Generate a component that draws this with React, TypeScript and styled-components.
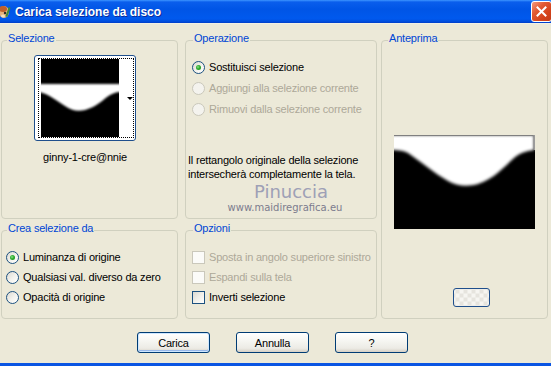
import React from 'react';
import styled, { createGlobalStyle, css } from 'styled-components';

const GlobalStyle = createGlobalStyle`
  html, body { margin: 0; padding: 0; background: #ECE9D8; }
  body { font-family: "Liberation Sans", Arial, sans-serif; font-size: 11px; letter-spacing: -0.2px; color: #000; }
  * { box-sizing: border-box; }
`;

const Window = styled.div`
  width: 551px;
  height: 366px;
  background: #ECE9D8;
  display: flex;
  flex-direction: column;
  border-bottom: 3px solid #0A55E3;
  overflow: hidden;
`;

const TitleBar = styled.div`
  height: 24px;
  flex: none;
  display: flex;
  align-items: center;
  background: linear-gradient(#3D95FF 0px, #0A5EEC 2px, #0055E6 40%, #0059EE 80%, #0050E0 92%, #003DC8 100%);
  border-bottom: 1px solid #F2F0E4;
`;

const TitleIcon = styled.svg`
  width: 11px;
  height: 16px;
  flex: none;
`;

const TitleText = styled.span`
  margin-left: 4px;
  color: #fff;
  font-weight: bold;
  font-size: 12px;
  letter-spacing: 0;
  text-shadow: 1px 1px 0 #0B2B9A;
`;

const CloseButton = styled.div`
  margin-left: auto;
  margin-right: -1px;
  width: 21px;
  height: 21px;
  border: 1px solid #fff;
  border-radius: 3px;
  background: linear-gradient(135deg, #F39A7E 0%, #E25A33 35%, #D4431B 70%, #C23C1A 100%);
  display: flex;
  align-items: center;
  justify-content: center;
`;

const Body = styled.div`
  flex: 1;
  display: flex;
  flex-direction: column;
  padding: 16px 3px 0 1px;
`;

const Columns = styled.div`
  display: flex;
  align-items: flex-start;
`;

const Column = styled.div<{ $width: number; $after: number }>`
  width: ${p => p.$width}px;
  margin-right: ${p => p.$after}px;
  display: flex;
  flex-direction: column;
  gap: 11px;
  flex: none;
`;

const Group = styled.div<{ $height: number }>`
  position: relative;
  height: ${p => p.$height}px;
  border: 1px solid #D0D0BF;
  border-radius: 4px;
  display: flex;
  flex-direction: column;
`;

const Legend = styled.span<{ $left?: number }>`
  position: absolute;
  top: -9px;
  left: ${p => p.$left ?? 5}px;
  padding: 0 1px;
  line-height: 13px;
  background: #ECE9D8;
  color: #0046D5;
`;

const SelectionContent = styled.div`
  display: flex;
  flex-direction: column;
  align-items: center;
  align-self: flex-start;
  margin: 14px 0 0 32px;
`;

const Thumb = styled.div`
  width: 102px;
  height: 86px;
  border: 1px solid #1F4F8C;
  border-radius: 3px;
  background: #fff;
  padding: 2px 1px 2px 3px;
`;

const FocusRect = styled.div`
  width: 100%;
  height: 100%;
  border: 1px dotted #000;
  display: flex;
  padding-left: 2px;
`;

const ThumbImage = styled.svg`
  width: 78px;
  height: 78px;
  flex: none;
  display: block;
`;

const ArrowStrip = styled.div`
  flex: 1;
  display: flex;
  align-items: center;
  justify-content: flex-end;
`;

const DownArrow = styled.span`
  width: 0;
  height: 0;
  border-left: 3px solid transparent;
  border-right: 3px solid transparent;
  border-top: 3px solid #000;
`;

const FileName = styled.div`
  margin-top: 10px;
  line-height: 13px;
`;

const OptionList = styled.div<{ $top: number; $left: number; $gap: number }>`
  display: flex;
  flex-direction: column;
  gap: ${p => p.$gap}px;
  padding: ${p => p.$top}px 0 0 ${p => p.$left}px;
`;

const OptionRow = styled.label<{ $disabled?: boolean }>`
  display: flex;
  align-items: center;
  gap: 4px;
  height: 13px;
  line-height: 13px;
  white-space: nowrap;
  color: ${p => (p.$disabled ? '#ACA899' : '#000')};
`;

const RadioMark = styled.span<{ $checked?: boolean; $disabled?: boolean }>`
  width: 13px;
  height: 13px;
  flex: none;
  border-radius: 50%;
  display: flex;
  align-items: center;
  justify-content: center;
  ${p =>
    p.$disabled
      ? css`
          border: 1px solid #CAC8BB;
          background: #F4F3EE;
        `
      : css`
          border: 1px solid #1C5180;
          background: linear-gradient(135deg, #DCDAD2 0%, #F4F3EE 55%, #FFFFFF 100%);
        `}
  &::after {
    content: '';
    display: ${p => (p.$checked ? 'block' : 'none')};
    width: 5px;
    height: 5px;
    border-radius: 50%;
    background: radial-gradient(circle at 40% 40%, #8AE28A 0%, #2BAA2B 45%, #1A8A1A 100%);
  }
`;

const CheckMark = styled.span<{ $disabled?: boolean }>`
  width: 13px;
  height: 13px;
  flex: none;
  ${p =>
    p.$disabled
      ? css`
          border: 1px solid #CAC8BB;
          background: #FBFBF8;
        `
      : css`
          border: 1px solid #1C5180;
          background: linear-gradient(135deg, #DCDAD2 0%, #F0EFE9 50%, #FFFFFF 100%);
        `}
`;

const InfoText = styled.div`
  margin: 37px 0 0 2px;
  line-height: 14px;
`;

const Watermark = styled.div<{ $size: number; $shift: number; $top: number; $color: string }>`
  margin-top: ${p => p.$top}px;
  padding-left: ${p => p.$shift}px;
  text-align: center;
  font-family: "DejaVu Sans", Verdana, sans-serif;
  font-size: ${p => p.$size}px;
  line-height: ${p => p.$size + 2}px;
  letter-spacing: 0;
  color: ${p => p.$color};
  white-space: nowrap;
`;

const PreviewGroup = styled(Group)`
  align-items: center;
`;

const PreviewImage = styled.svg`
  margin-top: 94px;
  width: 141px;
  height: 94px;
  display: block;
`;

const SmallButton = styled.div`
  margin: 59px 0 0 13px;
  width: 37px;
  height: 19px;
  border: 1px solid #1F4F8C;
  border-radius: 3px;
  background:
    repeating-conic-gradient(#F6F5F1 0% 25%, #E6E4DE 0% 50%) 50% 50% / 8px 8px;
`;

const ButtonRow = styled.div`
  display: flex;
  justify-content: center;
  gap: 26px;
  margin-top: 13px;
  padding-right: 4px;
`;

const Button = styled.button<{ $default?: boolean }>`
  width: 73px;
  height: 21px;
  padding: 0;
  font-family: "Liberation Sans", Arial, sans-serif;
  font-size: 11px;
  letter-spacing: -0.2px;
  color: #000;
  border: 1px solid #003C74;
  border-radius: 3px;
  background: linear-gradient(#FFFFFF 0%, #F6F6F2 40%, #ECEBE5 80%, #D6D0C5 100%);
  ${p =>
    p.$default &&
    css`
      box-shadow: inset 0 0 0 1px #CEE7FF, inset 0 -1px 0 1px #98B8EA;
    `}
`;

const radioRow = (label: string, opts: { checked?: boolean; disabled?: boolean } = {}) => (
  <OptionRow key={label} $disabled={opts.disabled}>
    <RadioMark $checked={opts.checked} $disabled={opts.disabled} />
    {label}
  </OptionRow>
);

const checkRow = (label: string, disabled?: boolean) => (
  <OptionRow key={label} $disabled={disabled}>
    <CheckMark $disabled={disabled} />
    {label}
  </OptionRow>
);

export default function App() {
  return (
    <>
      <GlobalStyle />
      <Window>
        <TitleBar>
          <TitleIcon viewBox="0 0 11 16">
            <ellipse cx="4" cy="8" rx="5" ry="6" fill="#E8B27A" />
            <ellipse cx="3" cy="5" rx="4" ry="3" fill="#C0602A" />
            <circle cx="5" cy="9" r="1.2" fill="#2A2A2A" />
            <rect x="7" y="3" width="2" height="10" fill="#3A8A3A" transform="rotate(20 8 8)" />
            <ellipse cx="3" cy="12" rx="2" ry="1.5" fill="#F0E0C0" />
          </TitleIcon>
          <TitleText>Carica selezione da disco</TitleText>
          <CloseButton>
            <svg width="13" height="13" viewBox="0 0 13 13">
              <path d="M2.5 2.5 L10.5 10.5 M10.5 2.5 L2.5 10.5" stroke="#fff" strokeWidth="2" strokeLinecap="square" />
            </svg>
          </CloseButton>
        </TitleBar>
        <Body>
          <Columns>
            <Column $width={177} $after={7}>
              <Group $height={179}>
                <Legend>Selezione</Legend>
                <SelectionContent>
                  <Thumb>
                    <FocusRect>
                      <ThumbImage viewBox="0 0 78 78">
                        <defs>
                          <filter id="blurA" x="-10%" y="-10%" width="120%" height="120%">
                            <feGaussianBlur stdDeviation="1.1" />
                          </filter>
                        </defs>
                        <rect width="78" height="78" fill="#000" />
                        <path
                          d="M-2 25 H80 V33 C74 33 70 35 66 38 C60 43 54 48 44 51 C36 53 30 51 24 47 C16 42 8 35 -2 33 Z"
                          fill="#fff"
                          filter="url(#blurA)"
                        />
                      </ThumbImage>
                      <ArrowStrip>
                        <DownArrow />
                      </ArrowStrip>
                    </FocusRect>
                  </Thumb>
                  <FileName>ginny-1-cre@nnie</FileName>
                </SelectionContent>
              </Group>
              <Group $height={89}>
                <Legend>Crea selezione da</Legend>
                <OptionList $top={20} $left={4} $gap={7}>
                  {radioRow('Luminanza di origine', { checked: true })}
                  {radioRow('Qualsiasi val. diverso da zero')}
                  {radioRow('Opacità di origine')}
                </OptionList>
              </Group>
            </Column>
            <Column $width={192} $after={4}>
              <Group $height={179}>
                <Legend $left={7}>Operazione</Legend>
                <OptionList $top={20} $left={6} $gap={8}>
                  {radioRow('Sostituisci selezione', { checked: true })}
                  {radioRow('Aggiungi alla selezione corrente', { disabled: true })}
                  {radioRow('Rimuovi dalla selezione corrente', { disabled: true })}
                </OptionList>
                <InfoText>
                  Il rettangolo originale della selezione
                  <br />
                  intersecherà completamente la tela.
                </InfoText>
                <Watermark $size={18} $shift={20} $top={1} $color="#9EA0B6">
                  Pinuccia
                </Watermark>
                <Watermark $size={10} $shift={8} $top={0} $color="#7C7C8E">
                  www.maidiregrafica.eu
                </Watermark>
              </Group>
              <Group $height={89}>
                <Legend $left={7}>Opzioni</Legend>
                <OptionList $top={20} $left={6} $gap={7}>
                  {checkRow('Sposta in angolo superiore sinistro', true)}
                  {checkRow('Espandi sulla tela', true)}
                  {checkRow('Inverti selezione')}
                </OptionList>
              </Group>
            </Column>
            <Column $width={167} $after={0}>
              <PreviewGroup $height={279}>
                <Legend $left={6}>Anteprima</Legend>
                <PreviewImage viewBox="0 0 141 94">
                  <defs>
                    <filter id="blurB" x="-10%" y="-10%" width="120%" height="120%">
                      <feGaussianBlur stdDeviation="1.4" />
                    </filter>
                  </defs>
                  <rect width="141" height="94" fill="#000" />
                  <path
                    d="M-3 0 H140 V15 C132 16 126 18 120 23 C110 32 100 44 84 49 C74 52 62 51 54 46 C40 38 26 26 14 18 C8 15 2 15 -3 15 Z"
                    fill="#fff"
                    filter="url(#blurB)"
                  />
                  <rect x="0" y="0" width="141" height="1" fill="#808080" />
                  <rect x="139.5" y="0" width="1.5" height="15" fill="#9A9A9A" />
                </PreviewImage>
                <SmallButton />
              </PreviewGroup>
            </Column>
          </Columns>
          <ButtonRow>
            <Button $default>Carica</Button>
            <Button>Annulla</Button>
            <Button>?</Button>
          </ButtonRow>
        </Body>
      </Window>
    </>
  );
}
